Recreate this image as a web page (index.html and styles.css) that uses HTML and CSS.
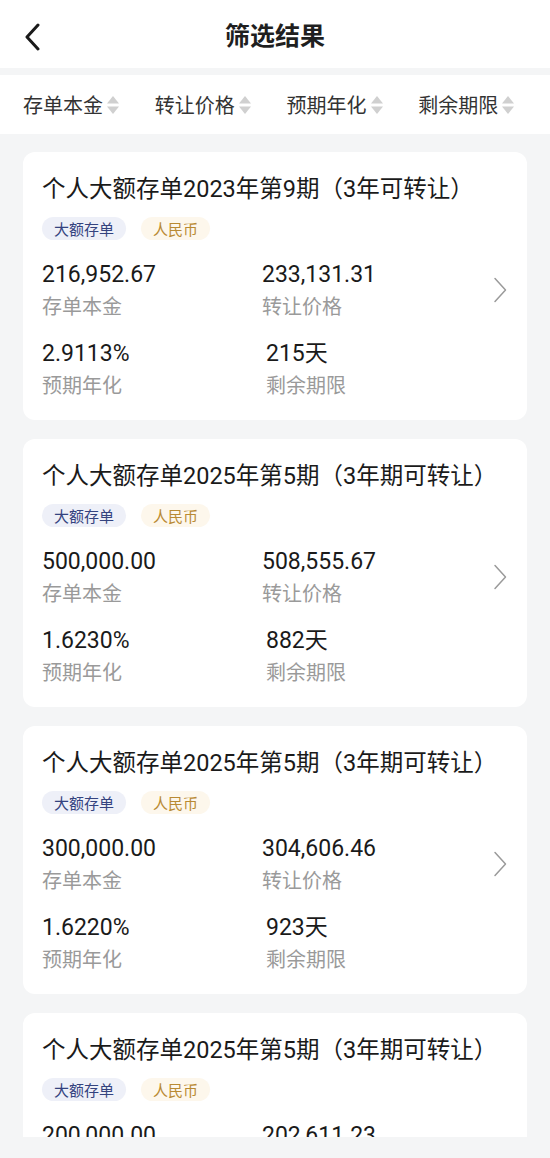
FILE: index.html
```html
<!DOCTYPE html>
<html lang="zh-CN">
<head>
<meta charset="utf-8">
<title>筛选结果</title>
<link rel="stylesheet" href="styles.css">
</head>
<body>
<div class="app">
  <header class="nav">
    <span class="back">
      <svg width="18" height="28" viewBox="0 0 18 28"><path d="M15 2 L4 14 L15 26" fill="none" stroke="#1a1a1a" stroke-width="3" stroke-linecap="round" stroke-linejoin="round"/></svg>
    </span>
    <h1 class="nav-title">筛选结果</h1>
  </header>

  <div class="sortbar">
    <div class="sort-item">存单本金<svg class="sort-icon" width="14" height="20" viewBox="0 0 14 20"><path d="M7 1 L13 8.5 H1 Z" fill="#d0d0d0"/><path d="M7 19 L13 11.5 H1 Z" fill="#d0d0d0"/></svg></div>
    <div class="sort-item">转让价格<svg class="sort-icon" width="14" height="20" viewBox="0 0 14 20"><path d="M7 1 L13 8.5 H1 Z" fill="#d0d0d0"/><path d="M7 19 L13 11.5 H1 Z" fill="#d0d0d0"/></svg></div>
    <div class="sort-item">预期年化<svg class="sort-icon" width="14" height="20" viewBox="0 0 14 20"><path d="M7 1 L13 8.5 H1 Z" fill="#d0d0d0"/><path d="M7 19 L13 11.5 H1 Z" fill="#d0d0d0"/></svg></div>
    <div class="sort-item">剩余期限<svg class="sort-icon" width="14" height="20" viewBox="0 0 14 20"><path d="M7 1 L13 8.5 H1 Z" fill="#d0d0d0"/><path d="M7 19 L13 11.5 H1 Z" fill="#d0d0d0"/></svg></div>
  </div>

  <main class="list">
    <article class="card">
      <h2 class="card-title">个人大额存单2023年第9期（3年可转让）</h2>
      <div class="tags"><span class="tag tag-blue">大额存单</span><span class="tag tag-gold">人民币</span></div>
      <div class="grid">
        <div class="cell"><div class="value">216,952.67</div><div class="label">存单本金</div></div>
        <div class="cell"><div class="value">233,131.31</div><div class="label">转让价格</div></div>
        <div class="arrow"><svg width="14" height="26" viewBox="0 0 14 26"><path d="M2 1.5 L12.5 13 L2 24.5" fill="none" stroke="#9a9a9a" stroke-width="1.5" stroke-linecap="round" stroke-linejoin="round"/></svg></div>
        <div class="cell"><div class="value">2.9113%</div><div class="label">预期年化</div></div>
        <div class="cell shift"><div class="value">215天</div><div class="label">剩余期限</div></div>
      </div>
    </article>

    <article class="card">
      <h2 class="card-title">个人大额存单2025年第5期（3年期可转让）</h2>
      <div class="tags"><span class="tag tag-blue">大额存单</span><span class="tag tag-gold">人民币</span></div>
      <div class="grid">
        <div class="cell"><div class="value">500,000.00</div><div class="label">存单本金</div></div>
        <div class="cell"><div class="value">508,555.67</div><div class="label">转让价格</div></div>
        <div class="arrow"><svg width="14" height="26" viewBox="0 0 14 26"><path d="M2 1.5 L12.5 13 L2 24.5" fill="none" stroke="#9a9a9a" stroke-width="1.5" stroke-linecap="round" stroke-linejoin="round"/></svg></div>
        <div class="cell"><div class="value">1.6230%</div><div class="label">预期年化</div></div>
        <div class="cell shift"><div class="value">882天</div><div class="label">剩余期限</div></div>
      </div>
    </article>

    <article class="card">
      <h2 class="card-title">个人大额存单2025年第5期（3年期可转让）</h2>
      <div class="tags"><span class="tag tag-blue">大额存单</span><span class="tag tag-gold">人民币</span></div>
      <div class="grid">
        <div class="cell"><div class="value">300,000.00</div><div class="label">存单本金</div></div>
        <div class="cell"><div class="value">304,606.46</div><div class="label">转让价格</div></div>
        <div class="arrow"><svg width="14" height="26" viewBox="0 0 14 26"><path d="M2 1.5 L12.5 13 L2 24.5" fill="none" stroke="#9a9a9a" stroke-width="1.5" stroke-linecap="round" stroke-linejoin="round"/></svg></div>
        <div class="cell"><div class="value">1.6220%</div><div class="label">预期年化</div></div>
        <div class="cell shift"><div class="value">923天</div><div class="label">剩余期限</div></div>
      </div>
    </article>

    <article class="card">
      <h2 class="card-title">个人大额存单2025年第5期（3年期可转让）</h2>
      <div class="tags"><span class="tag tag-blue">大额存单</span><span class="tag tag-gold">人民币</span></div>
      <div class="grid">
        <div class="cell"><div class="value">200,000.00</div><div class="label">存单本金</div></div>
        <div class="cell"><div class="value">202,611.23</div><div class="label">转让价格</div></div>
        <div class="arrow"><svg width="14" height="26" viewBox="0 0 14 26"><path d="M2 1.5 L12.5 13 L2 24.5" fill="none" stroke="#9a9a9a" stroke-width="1.5" stroke-linecap="round" stroke-linejoin="round"/></svg></div>
        <div class="cell"><div class="value">1.6220%</div><div class="label">预期年化</div></div>
        <div class="cell shift"><div class="value">923天</div><div class="label">剩余期限</div></div>
      </div>
    </article>
  </main>
  <div class="bottom-bar"></div>
</div>
</body>
</html>
```

FILE: styles.css
```css
* { box-sizing: border-box; }
html, body { margin: 0; padding: 0; }
body {
  background: #f4f5f6;
  font-family: Roboto, "Noto Sans CJK SC", sans-serif;
  color: #1a1a1a;
}
.app {
  width: 550px;
  height: 1158px;
  display: flex;
  flex-direction: column;
  overflow: hidden;
}
.nav {
  height: 68px;
  background: #fff;
  display: flex;
  align-items: center;
  justify-content: center;
  position: relative;
  flex: none;
}
.back {
  position: absolute;
  left: 23px;
  top: 23px;
  display: flex;
}
.nav-title {
  margin: 0;
  font-family: "Noto Sans CJK SC", sans-serif;
  font-size: 25px;
  font-weight: 700;
  color: #1f1f1f;
  line-height: 1;
}
.sortbar {
  margin-top: 7px;
  height: 59px;
  background: #fff;
  display: flex;
  align-items: center;
  padding-left: 23px;
  flex: none;
}
.sort-item {
  width: 134px;
  display: flex;
  align-items: center;
  font-family: "Noto Sans CJK SC", sans-serif;
  font-size: 20px;
  color: #333;
  white-space: nowrap;
}
.sort-icon { margin-left: 3px; }
.list {
  flex: 1;
  min-height: 0;
  overflow: hidden;
  padding: 18px 23px 0;
  display: flex;
  flex-direction: column;
  gap: 19px;
}
.card {
  flex: none;
  height: 268px;
  background: #fff;
  border-radius: 12px;
  padding: 22px 20px 0 19px;
}
.card-title {
  margin: 0;
  font-size: 23.5px;
  font-weight: 400;
  line-height: 30px;
  color: #1a1a1a;
  white-space: nowrap;
}
.tags {
  margin-top: 13px;
  display: flex;
  gap: 15px;
}
.tag {
  height: 23px;
  line-height: 23px;
  padding: 0 12px;
  border-radius: 12px;
  font-family: "Noto Sans CJK SC", sans-serif;
  font-size: 15px;
}
.tag-blue { background: #eef0f8; color: #34437f; }
.tag-gold { background: #fdf7ec; color: #b98a33; }
.grid {
  margin-top: 21px;
  display: grid;
  grid-template-columns: 220px 1fr 14px;
  row-gap: 21px;
}
.cell.shift { padding-left: 4px; }
.arrow {
  grid-row: 1;
  grid-column: 3;
  display: flex;
  align-items: center;
  justify-content: flex-end;
}
.value {
  font-size: 23px;
  line-height: 28px;
  color: #1a1a1a;
}
.label {
  margin-top: 4px;
  font-family: "Noto Sans CJK SC", sans-serif;
  font-size: 20px;
  line-height: 26px;
  color: #9a9a9a;
}
.bottom-bar {
  height: 21px;
  flex: none;
  background: #f4f5f6;
}
```
